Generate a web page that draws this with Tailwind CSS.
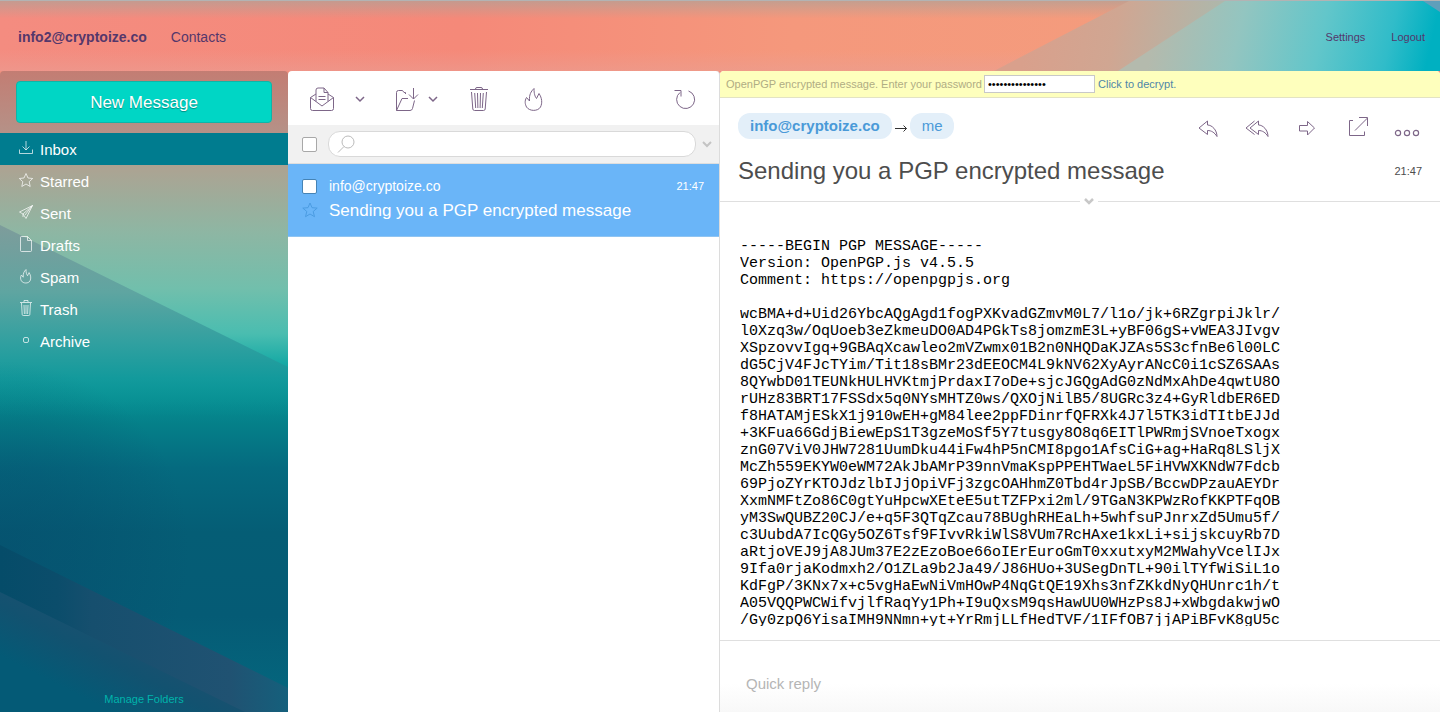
<!DOCTYPE html>
<html lang="en">
<head>
  <meta charset="UTF-8" />
  <meta name="viewport" content="width=device-width, initial-scale=1.0"/>
  <title>Inbox - info2@cryptoize.co</title>
  <script src="https://cdn.jsdelivr.net/npm/@tailwindcss/browser@4"></script>
</head>
<body class="bg-white font-['Liberation_Sans',Arial,sans-serif] text-[15px]">
  <div class="h-screen flex flex-col overflow-hidden">

    <!-- Header -->
    <header class="relative h-[71px] shrink-0 flex items-center justify-between border-t border-[#b3b3b3] pl-[18px] pr-[15px] pt-[2px] text-[#54376b]">
      <svg class="absolute inset-0 w-full h-full" viewBox="0 0 1440 70" preserveAspectRatio="none" aria-hidden="true">
        <defs>
          <linearGradient id="sky"><stop offset="0" stop-color="#f48c80"/><stop offset=".32" stop-color="#f58979"/><stop offset=".55" stop-color="#f5987c"/><stop offset=".8" stop-color="#f49c7d"/></linearGradient>
          <linearGradient id="band" gradientUnits="userSpaceOnUse" x1="1030" y1="20" x2="1240" y2="60"><stop offset="0" stop-color="#d9a08c"/><stop offset=".4" stop-color="#d0a692"/><stop offset="1" stop-color="#a4bcb2"/></linearGradient>
          <linearGradient id="sea" gradientUnits="userSpaceOnUse" x1="1160" y1="10" x2="1425" y2="70"><stop offset="0" stop-color="#b4baad"/><stop offset=".3" stop-color="#93c5c0"/><stop offset=".6" stop-color="#62c6ca"/><stop offset=".85" stop-color="#30bcc9"/><stop offset="1" stop-color="#00b0c1"/></linearGradient>
          <linearGradient id="haze" x2="0" y2="1"><stop offset="0" stop-color="#b0a197" stop-opacity=".7"/><stop offset=".25" stop-color="#b0a197" stop-opacity="0"/><stop offset=".7" stop-color="#e9a096" stop-opacity="0"/><stop offset="1" stop-color="#e9a096" stop-opacity=".5"/></linearGradient>
        </defs>
        <path fill="url(#sky)" d="M0 0H1440V70H0z"/>
        <path fill="url(#haze)" d="M0 0H1150V70H0z"/>
        <path fill="url(#band)" d="M1129 0H1440V70H994z"/>
        <path fill="url(#sea)" d="M1225 0H1440V70H1118z"/>
        <path fill="#5f9fbb" d="M1423 0H1440V11z"/>
      </svg>
      <nav class="relative flex gap-6 text-[14px]">
        <a href="#" class="font-bold">info2@cryptoize.co</a>
        <a href="#">Contacts</a>
      </nav>
      <nav class="relative flex gap-[26px] text-[11px]">
        <a href="#">Settings</a>
        <a href="#">Logout</a>
      </nav>
    </header>

    <main class="flex flex-1 min-h-0 bg-[#f0907f]">

      <!-- Folders -->
      <aside class="relative w-1/5 shrink-0 flex flex-col overflow-hidden rounded-t text-white">
        <svg class="absolute inset-0 w-full h-full" viewBox="0 0 288 641" preserveAspectRatio="none" aria-hidden="true">
          <defs>
            <linearGradient id="side" x2="0" y2="1"><stop offset="0" stop-color="#c37d73"/><stop offset=".09" stop-color="#b69086"/><stop offset=".155" stop-color="#aba493"/><stop offset=".25" stop-color="#8eb6a3"/><stop offset=".34" stop-color="#71bfac"/><stop offset=".41" stop-color="#4abdb0"/><stop offset=".46" stop-color="#12a8a4"/><stop offset=".49" stop-color="#089698"/><stop offset=".55" stop-color="#058089"/><stop offset=".62" stop-color="#056a7f"/><stop offset=".72" stop-color="#055d75"/><stop offset=".85" stop-color="#055b75"/><stop offset="1" stop-color="#04687f"/></linearGradient>
            <linearGradient id="shade" gradientUnits="userSpaceOnUse" x1="0" y1="154" x2="0" y2="345"><stop offset="0" stop-color="#7e9c9b"/><stop offset=".35" stop-color="#5fa5a1"/><stop offset=".62" stop-color="#30a0a0"/><stop offset=".8" stop-color="#139a9c"/><stop offset="1" stop-color="#089093" stop-opacity="0"/></linearGradient>
            <radialGradient id="dim" gradientUnits="userSpaceOnUse" cx="0" cy="480" r="190"><stop offset="0" stop-color="#064a6b" stop-opacity=".5"/><stop offset=".4" stop-color="#064a6b" stop-opacity=".35"/><stop offset="1" stop-color="#064a6b" stop-opacity="0"/></radialGradient>
            <linearGradient id="low"><stop offset="0" stop-color="#054c69"/><stop offset=".2" stop-color="#0b4d6b"/><stop offset=".32" stop-color="#164f6e"/><stop offset=".8" stop-color="#205272"/><stop offset="1" stop-color="#15607c"/></linearGradient>
            <linearGradient id="mauve" gradientUnits="userSpaceOnUse" x1="90" y1="530" x2="50" y2="610"><stop offset="0" stop-color="#1f5070"/><stop offset=".5" stop-color="#125270"/><stop offset="1" stop-color="#045a76"/></linearGradient>
          </defs>
          <path fill="url(#side)" d="M0 0H288V641H0z"/>
          <path fill="url(#shade)" d="M0 154L288 296V345H0z"/>
          <path fill="url(#dim)" d="M0 280H288V641H0z"/>
          <path fill="url(#low)" d="M0 474L288 617V641H0z"/>
          <path fill="url(#mauve)" d="M0 521L245 641H0z"/>
        </svg>

        <div class="relative px-4 pt-[10px] pb-[10px]">
          <button class="w-full h-[42px] rounded border border-[#0eb5a8] bg-[#00d6c5] pt-[2px] text-[17px] [text-shadow:0_1px_1px_rgba(0,0,0,0.35)]">New Message</button>
        </div>
        <ul class="relative [&_a]:flex [&_a]:h-8 [&_a]:items-center [&_a]:gap-[6px] [&_a]:pl-[18px] [&_a]:pt-[2px] [&_svg]:w-4 [&_svg]:h-4 [&_svg]:mb-[4px] [&_svg]:fill-none [&_svg]:stroke-white/70">
          <li><a href="#" class="bg-[#007c8f]"><svg viewBox="0 0 16 16"><path d="M1.500 9.500v4h13v-4M8 1v9M4.500 6.500L8 10l3.500-3.500"/></svg>Inbox</a></li>
          <li><a href="#"><svg viewBox="0 0 16 16"><path d="M8 1.500l2 4.500 4.700.5-3.500 3.200 1 4.800L8 12l-4.200 2.500 1-4.800L1.300 6.500 6 6z"/></svg>Starred</a></li>
          <li><a href="#"><svg viewBox="0 0 16 16"><path d="M14.500 1.500L1.500 8l3.500 2 3 4.500zM14.500 1.500L5 10v3M14.500 1.500L7 11"/></svg>Sent</a></li>
          <li><a href="#"><svg viewBox="0 0 16 16"><path d="M9.500.5h-6q-1 0-1 1v13q0 1 1 1h9q1 0 1-1v-10zv4h4"/></svg>Drafts</a></li>
          <li><a href="#"><svg viewBox="0 0 26 26" stroke-width="1.600"><path d="M5.500 11.500C3.500 15 4 18 5.500 21c3 4.500 11.500 4.500 14 0 2-4 1.500-9-1.500-13.500l-2.500 5C14 10.500 13 8 13 2.500c-3 3-5 6-4.500 12.500z"/></svg>Spam</a></li>
          <li><a href="#"><svg viewBox="0 0 16 16"><path d="M2 2.500h12M6 2V.5h4V2M3.500 3l.7 11.500q.1 1 1 1h5.600q.9 0 1-1L12.500 3M6 5l.4 9M8 5v9M10 5l-.4 9"/></svg>Trash</a></li>
          <li><a href="#"><svg viewBox="0 0 16 16"><rect x="5.500" y="5.500" width="5" height="5" rx="1.500"/></svg>Archive</a></li>
        </ul>
        <a href="#" class="relative mt-auto pb-[5px] text-center text-[11px] text-[#00b3ab]">Manage Folders</a>
      </aside>

      <!-- Message list -->
      <section class="w-[30%] shrink-0 flex flex-col rounded-t border-r border-[#dcdcdc] bg-white">
        <div class="h-[54px] flex items-center pl-[21px] pr-[23px] pt-[2px] text-[#7d6688] [&_svg]:fill-none [&_svg]:stroke-current">
          <button aria-label="Mark as read"><svg class="w-[26px] h-[26px]" viewBox="0 0 26 26"><path d="M7 8L1.500 11.500v11q0 2 2 2h19q2 0 2-2v-11L19 8M1.500 11.500L13 20l11.500-8.500M7 15.500V4q0-2 2-2h6l4 4.500v9M15 2v4.500h4M9.500 10.500h7M9.500 13.500h7"/></svg></button>
          <button class="ml-5" aria-label="Mark options"><svg class="w-[10px] h-[10px]" viewBox="0 0 10 10" stroke-width="1.500"><path d="M1 3l4 4 4-4"/></svg></button>
          <button class="ml-[29px]" aria-label="Move to folder"><svg class="w-[26px] h-[26px]" viewBox="0 0 26 26"><path d="M11.500 8V6.500H10L8.500 4.500H4.500q-2 0-2 2v18L8 12.500h6M20.500 14.500l-2 8q-.5 2-2.500 2H2.500M19.500 2v11M15 8.500l4.500 4.500L24 8.500"/></svg></button>
          <button class="ml-2" aria-label="Move options"><svg class="w-[10px] h-[10px]" viewBox="0 0 10 10" stroke-width="1.500"><path d="M1 3l4 4 4-4"/></svg></button>
          <button class="ml-[28px]" aria-label="Delete"><svg class="w-[26px] h-[26px]" viewBox="0 0 26 26"><path d="M4 3.500h18M9.500 3q0-1.500 1.500-1.500h4q1.500 0 1.500 1.500M5.500 6l1.300 17q.2 1.500 1.700 1.500h9q1.500 0 1.700-1.500L20.500 6M8.700 7l1 15M11.500 7l.4 15M14.500 7l-.4 15M17.300 7l-1 15"/></svg></button>
          <button class="ml-[29px]" aria-label="Spam"><svg class="w-[26px] h-[26px]" viewBox="0 0 26 26"><path d="M5.500 11.500C3.500 15 4 18 5.500 21c3 4.500 11.500 4.500 14 0 2-4 1.500-9-1.500-13.500l-2.500 5C14 10.500 13 8 13 2.500c-3 3-5 6-4.500 12.500z"/></svg></button>
          <button class="ml-auto" aria-label="Refresh"><svg class="w-[22px] h-[22px]" viewBox="0 0 22 22"><path d="M6 4.500A9 9 0 1 0 14.500 3M.5 2.500H7v6"/></svg></button>
        </div>
        <div class="h-[39px] flex items-center border-b border-[#dedede] bg-[#f1f1f1] pl-[14px] pr-[7px]">
          <input type="checkbox" aria-label="Select all" class="appearance-none w-[15px] h-[15px] rounded-[2px] border border-[#a8a8a8] bg-white"/>
          <label class="ml-[11px] flex-1 flex items-center h-[26px] rounded-xl border border-[#d9d9d9] bg-white pl-2">
            <svg class="w-[18px] h-[18px] fill-none stroke-[#bbb]" viewBox="0 0 18 18"><circle cx="11" cy="7" r="6"/><path d="M7 11.500L1 17.500"/></svg>
            <input type="search" aria-label="Search" class="flex-1 min-w-0 px-2 text-[14px] outline-none"/>
          </label>
          <button class="ml-[6px]" aria-label="Search options"><svg class="w-[10px] h-[10px] fill-none stroke-[#c4c4c4]" viewBox="0 0 10 10" stroke-width="2"><path d="M1 3l4 4 4-4"/></svg></button>
        </div>
        <article class="flex gap-[11px] h-[73px] border-b border-[#8fc4f2] bg-[#6ab5f8] pl-[14px] pr-[15px] pt-[13px] text-white">
          <div class="w-4 flex flex-col gap-2">
            <input type="checkbox" aria-label="Select message" class="appearance-none w-[15px] h-[15px] mt-[2px] rounded-[2px] border border-[#4583b5] bg-white"/>
            <svg class="w-4 h-4 fill-none stroke-[#4b9ce2]" viewBox="0 0 16 16"><path d="M8 1l2 4.700 5.200.4-4 3.400 1.300 5.200L8 12l-4.500 2.700 1.300-5.200-4-3.400L6 5.700z"/></svg>
          </div>
          <div class="flex-1">
            <div class="flex items-center justify-between h-[18px] text-[14px]">
              <span>info@cryptoize.co</span>
              <time class="text-[11px]">21:47</time>
            </div>
            <h2 class="mt-1 text-[17px] leading-6">Sending you a PGP encrypted message</h2>
          </div>
        </article>
      </section>

      <!-- Opened message -->
      <section class="flex-1 min-w-0 flex flex-col overflow-hidden rounded-t bg-white">
        <form class="h-[27px] shrink-0 flex items-center border-b border-[#e3e3c4] bg-[#feffbd] pl-[6px] text-[11px] text-[#b0ad84]">
          <label for="password">OpenPGP encrypted message. Enter your password</label>
          <input id="password" type="password" value="correcthorsebat" class="ml-[2px] w-[111px] h-[18px] border border-[#c8c8c8] bg-white px-[3px] text-[11px] text-black"/>
          <a href="#" class="ml-[3px] text-[#4f86a8]">Click to decrypt.</a>
        </form>

        <div class="relative shrink-0 h-[104px] border-b border-[#dfdfdf] px-[18px] pt-[15px]">
          <div class="flex justify-between">
            <div class="flex items-center h-[26px] text-[#4a9ad8]">
              <span class="h-[26px] leading-[26px] rounded-xl bg-[#e3eff9] px-3 font-bold">info@cryptoize.co</span>
              <svg class="mx-[3px] mt-1 w-3 h-[10px] fill-none stroke-[#333]" viewBox="0 0 12 10"><path d="M0 5.500h11.500M8.500 2.500l3 3-3 3"/></svg>
              <span class="h-[26px] leading-[26px] rounded-xl bg-[#e3eff9] px-3">me</span>
            </div>
            <div class="flex items-center pr-[2px] pt-[2px] text-[#7d6688] [&_svg]:fill-none [&_svg]:stroke-current">
              <button aria-label="Reply"><svg class="w-5 h-5 mt-1" viewBox="0 0 20 20"><path d="M9.500 2L1 9l8.500 6.500v-4c4 0 7 2 9.500 6C19 11 14 6 9.500 6z"/></svg></button>
              <button class="ml-[27px]" aria-label="Reply all"><svg class="w-6 h-5 mt-1" viewBox="0 0 24 20"><path d="M13.500 2L5 9l8.500 6.500v-4c4 0 7 2 9.500 6C23 11 18 6 13.500 6zM9.500 2L1 9l8.500 6.500"/></svg></button>
              <button class="ml-[29px]" aria-label="Forward"><svg class="w-[18px] h-5 mt-1" viewBox="0 0 18 20"><path d="M1.500 6.500h8v-4L16.500 9l-7 7v-4h-8z"/></svg></button>
              <button class="ml-[31px]" aria-label="Open in new window"><svg class="w-[22px] h-[22px]" viewBox="0 0 22 22"><path d="M6 4.500H2.500v15h15v-4M8 14.500L20.500 2M12 1.500h8.500V10"/></svg></button>
              <button class="ml-[25px]" aria-label="More"><svg class="w-[26px] h-[10px] mt-3" viewBox="0 0 26 10" stroke-width="1.200"><circle cx="4" cy="5" r="2.600"/><circle cx="13" cy="5" r="2.600"/><circle cx="22" cy="5" r="2.600"/></svg></button>
            </div>
          </div>
          <div class="flex items-center justify-between mt-4 text-[#4d4d4d]">
            <h1 class="text-[24px] leading-8">Sending you a PGP encrypted message</h1>
            <time class="text-[11px]">21:47</time>
          </div>
          <button class="absolute left-1/2 -bottom-2 w-[18px] h-4 flex items-center justify-center bg-white" aria-label="Show details"><svg class="w-[10px] h-[10px] fill-none stroke-[#c8c8c8]" viewBox="0 0 10 10" stroke-width="2.500"><path d="M1 3l4 4 4-4"/></svg></button>
        </div>

        <div class="flex-1 min-h-0 px-5 pt-9 pb-[14px]">
          <pre class="h-full overflow-hidden font-['Liberation_Mono',monospace] text-[15px] leading-[17px] text-black">-----BEGIN PGP MESSAGE-----
Version: OpenPGP.js v4.5.5
Comment: https://openpgpjs.org

wcBMA+d+Uid26YbcAQgAgd1fogPXKvadGZmvM0L7/l1o/jk+6RZgrpiJklr/
l0Xzq3w/OqUoeb3eZkmeuDO0AD4PGkTs8jomzmE3L+yBF06gS+vWEA3JIvgv
XSpzovvIgq+9GBAqXcawleo2mVZwmx01B2n0NHQDaKJZAs5S3cfnBe6l00LC
dG5CjV4FJcTYim/Tit18sBMr23dEEOCM4L9kNV62XyAyrANcC0i1cSZ6SAAs
8QYwbD01TEUNkHULHVKtmjPrdaxI7oDe+sjcJGQgAdG0zNdMxAhDe4qwtU8O
rUHz83BRT17FSSdx5q0NYsMHTZ0ws/QXOjNilB5/8UGRc3z4+GyRldbER6ED
f8HATAMjESkX1j910wEH+gM84lee2ppFDinrfQFRXk4J7l5TK3idTItbEJJd
+3KFua66GdjBiewEpS1T3gzeMoSf5Y7tusgy8O8q6EITlPWRmjSVnoeTxogx
znG07ViV0JHW7281UumDku44iFw4hP5nCMI8pgo1AfsCiG+ag+HaRq8LSljX
McZh559EKYW0eWM72AkJbAMrP39nnVmaKspPPEHTWaeL5FiHVWXKNdW7Fdcb
69PjoZYrKTOJdzlbIJjOpiVFj3zgcOAHhmZ0Tbd4rJpSB/BccwDPzauAEYDr
XxmNMFtZo86C0gtYuHpcwXEteE5utTZFPxi2ml/9TGaN3KPWzRofKKPTFqOB
yM3SwQUBZ20CJ/e+q5F3QTqZcau78BUghRHEaLh+5whfsuPJnrxZd5Umu5f/
c3UubdA7IcQGy5OZ6Tsf9FIvvRkiWlS8VUm7RcHAxe1kxLi+sijskcuyRb7D
aRtjoVEJ9jA8JUm37E2zEzoBoe66oIErEuroGmT0xxutxyM2MWahyVcelIJx
9Ifa0rjaKodmxh2/O1ZLa9b2Ja49/J86HUo+3USegDnTL+90ilTYfWiSiL1o
KdFgP/3KNx7x+c5vgHaEwNiVmHOwP4NqGtQE19Xhs3nfZKkdNyQHUnrc1h/t
A05VQQPWCWifvjlfRaqYy1Ph+I9uQxsM9qsHawUU0WHzPs8J+xWbgdakwjwO
/Gy0zpQ6YisaIMH9NNmn+yt+YrRmjLLfHedTVF/1IFfOB7jjAPiBFvK8gU5c</pre>
        </div>

        <div class="h-[72px] shrink-0 border-t border-[#dfdfdf] bg-linear-to-b from-white from-60% to-[#f8f8f8] pl-[26px] pt-8">
          <textarea rows="1" aria-label="Quick reply" placeholder="Quick reply" class="block w-full resize-none overflow-hidden leading-[22px] placeholder:text-[#b5b5b5] outline-none"></textarea>
        </div>
      </section>

    </main>
  </div>
</body>
</html>
